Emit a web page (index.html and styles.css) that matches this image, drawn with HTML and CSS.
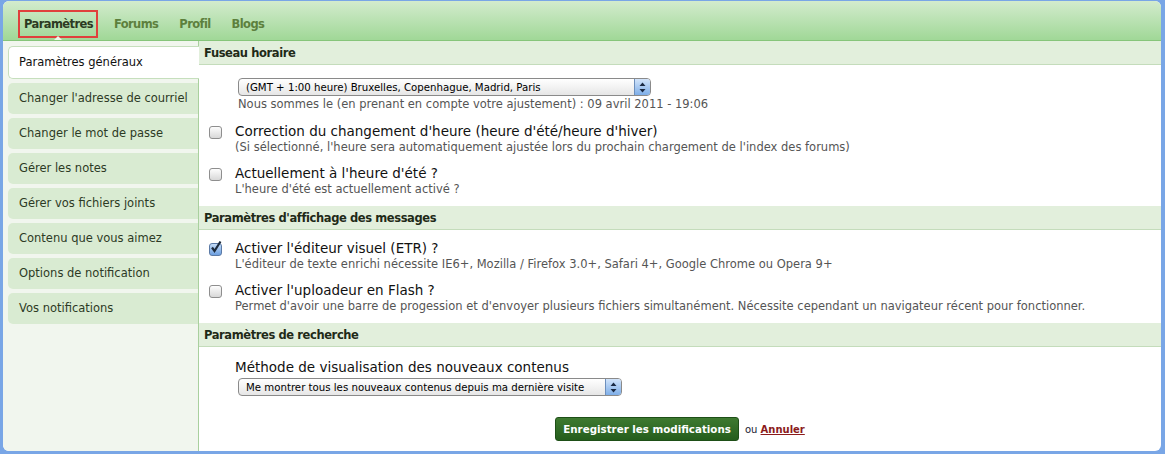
FILE: index.html
```html
<!DOCTYPE html>
<html lang="fr">
<head>
    <meta charset="UTF-8">
    <title>Paramètres</title>
    <link rel="stylesheet" href="styles.css">
</head>
<body>

<div class="window">
    <div class="tabs">
        <a class="tab active" href="#">Paramètres<span class="caret"></span></a>
        <a class="tab" href="#">Forums</a>
        <a class="tab" href="#">Profil</a>
        <a class="tab" href="#">Blogs</a>
    </div>

    <div class="main">
        <div class="sidebar">
            <a class="side-item current" href="#">Paramètres généraux</a>
            <a class="side-item" href="#">Changer l'adresse de courriel</a>
            <a class="side-item" href="#">Changer le mot de passe</a>
            <a class="side-item" href="#">Gérer les notes</a>
            <a class="side-item" href="#">Gérer vos fichiers joints</a>
            <a class="side-item" href="#">Contenu que vous aimez</a>
            <a class="side-item" href="#">Options de notification</a>
            <a class="side-item" href="#">Vos notifications</a>
        </div>

        <div class="content">
            <h3 class="section-title">Fuseau horaire</h3>
            <div class="section">
                <div class="field">
                    <div class="select wide">
                        <span class="select-text">(GMT + 1:00 heure) Bruxelles, Copenhague, Madrid, Paris</span>
                        <span class="arrows"><svg width="7" height="11" viewBox="0 0 7 11"><path d="M3.5 0.5 L6.5 4 L0.5 4 Z M3.5 10.5 L6.5 7 L0.5 7 Z" fill="#1b2a44"/></svg></span>
                    </div>
                    <p class="desc">Nous sommes le (en prenant en compte votre ajustement) : 09 avril 2011 - 19:06</p>
                </div>
                <div class="option">
                    <span class="check"></span>
                    <div>
                        <div class="label">Correction du changement d'heure (heure d'été/heure d'hiver)</div>
                        <p class="desc">(Si sélectionné, l'heure sera automatiquement ajustée lors du prochain chargement de l'index des forums)</p>
                    </div>
                </div>
                <div class="option">
                    <span class="check"></span>
                    <div>
                        <div class="label">Actuellement à l'heure d'été ?</div>
                        <p class="desc">L'heure d'été est actuellement activé ?</p>
                    </div>
                </div>
            </div>

            <h3 class="section-title">Paramètres d'affichage des messages</h3>
            <div class="section">
                <div class="option">
                    <span class="check checked"><svg width="14" height="14" viewBox="0 0 14 14"><path d="M3 7.5 L5.5 11 L11.5 1.5" fill="none" stroke="#1d2b3c" stroke-width="2.2"/></svg></span>
                    <div>
                        <div class="label">Activer l'éditeur visuel (ETR) ?</div>
                        <p class="desc">L'éditeur de texte enrichi nécessite IE6+, Mozilla / Firefox 3.0+, Safari 4+, Google Chrome ou Opera 9+</p>
                    </div>
                </div>
                <div class="option">
                    <span class="check"></span>
                    <div>
                        <div class="label">Activer l'uploadeur en Flash ?</div>
                        <p class="desc">Permet d'avoir une barre de progession et d'envoyer plusieurs fichiers simultanément. Nécessite cependant un navigateur récent pour fonctionner.</p>
                    </div>
                </div>
            </div>

            <h3 class="section-title">Paramètres de recherche</h3>
            <div class="section">
                <div class="field">
                    <div class="label">Méthode de visualisation des nouveaux contenus</div>
                    <div class="select">
                        <span class="select-text">Me montrer tous les nouveaux contenus depuis ma dernière visite</span>
                        <span class="arrows"><svg width="7" height="11" viewBox="0 0 7 11"><path d="M3.5 0.5 L6.5 4 L0.5 4 Z M3.5 10.5 L6.5 7 L0.5 7 Z" fill="#1b2a44"/></svg></span>
                    </div>
                </div>
            </div>

            <div class="actions">
                <button class="save">Enregistrer les modifications</button>
                <span class="or">ou <a href="#">Annuler</a></span>
            </div>
        </div>
    </div>
</div>

</body>
</html>
```

FILE: styles.css
```css
body {
    margin: 0;
    background: #79a6e6;
    font-family: "DejaVu Sans", sans-serif;
    color: #222;
}
.window {
    margin: 1px 4px 3px 3px;
    height: 450px;
    background: #fff;
    border-radius: 6px;
    overflow: hidden;
    display: flex;
    flex-direction: column;
}
.tabs {
    flex-shrink: 0;
    height: 37px;
    background: linear-gradient(#d3ebcd, #a0d897);
    border-bottom: 1px solid #86c57a;
    display: flex;
    align-items: flex-end;
    padding: 0 0 2px 15px;
    gap: 21px;
}
.tab {
    position: relative;
    font-size: 11.5px;
    font-weight: bold;
    letter-spacing: -0.6px;
    line-height: 14px;
    color: #5d803d;
    text-decoration: none;
    padding: 7px 0;
}
.tab.active {
    color: #2c3a22;
    border: 2px solid #e0403c;
    padding: 5px 3px 5px 4px;
    margin-right: -5px;
}
.caret {
    position: absolute;
    left: 50%;
    bottom: -4px;
    margin-left: -4px;
    border: 4px solid transparent;
    border-bottom-color: #eef6ea;
    border-top: 0;
}
.main {
    flex: 1;
    display: flex;
}
.sidebar {
    width: 190px;
    padding: 5px 0 0 5px;
    background: #f1f6ee;
    border-right: 1px solid #a9d09e;
    display: flex;
    flex-direction: column;
    gap: 4px;
}
.side-item {
    height: 31px;
    line-height: 31px;
    padding-left: 11px;
    font-size: 11.5px;
    color: #2d3a25;
    text-decoration: none;
    background: #d9ebd2;
    border-radius: 5px 0 0 5px;
}
.side-item.current {
    background: #fff;
    color: #111;
    border: 1px solid #c6dfbd;
    border-right: 0;
    margin-right: -1px;
    padding-left: 10px;
    position: relative;
}
.content {
    flex: 1;
}
.section-title {
    margin: 0;
    height: 23px;
    line-height: 24px;
    padding-left: 5px;
    font-size: 11.5px;
    letter-spacing: -0.4px;
    color: #1f2a18;
    background: #e2efdc;
    border-bottom: 1px solid #c4dcbb;
}
.section {
    padding: 10px 0 9px 10px;
}
.field {
    padding: 2px 0 0 29px;
}
.field > .label {
    margin-left: -3px;
}
.option {
    display: flex;
    gap: 13px;
    margin-top: 10px;
}
.section > .option:first-child {
    margin-top: 0;
}
.field + .option {
    margin-top: 11px;
}
.check {
    width: 11px;
    height: 11px;
    margin-top: 3px;
    border: 1px solid #8e8e8e;
    border-radius: 3px;
    background: linear-gradient(#fdfdfd, #d8d8d8);
    flex-shrink: 0;
    position: relative;
}
.check.checked {
    background: linear-gradient(#c5dcf7, #6c9fe0);
    border-color: #5b7aa6;
}
.check svg {
    position: absolute;
    left: -1px;
    top: -4px;
}
.label {
    font-size: 13.5px;
    color: #111;
    line-height: 17px;
}
.desc {
    margin: 0;
    font-size: 11.5px;
    color: #555;
    line-height: 15px;
}
.select {
    width: 411px;
    height: 16px;
    border: 1px solid #8a8a8a;
    border-radius: 4px;
    background: linear-gradient(#ffffff, #e6e6e6);
    display: flex;
    align-items: center;
    justify-content: space-between;
    overflow: hidden;
}
.select.wide {
    margin: 1px 0 1px 0;
}
.field > .label + .select {
    width: 382px;
    margin-top: 2px;
}
.select-text {
    font-size: 10.2px;
    color: #000;
    padding-left: 7px;
    white-space: nowrap;
}
.arrows {
    width: 15px;
    height: 16px;
    display: flex;
    align-items: center;
    justify-content: center;
    background: linear-gradient(#d2e4fa, #7eaee8);
    border-left: 1px solid #6d8fbc;
}
.actions {
    display: flex;
    justify-content: center;
    align-items: center;
    margin-top: 12px;
}
.save {
    font-family: "DejaVu Sans", sans-serif;
    font-size: 10.3px;
    font-weight: bold;
    color: #fff;
    height: 24px;
    background: linear-gradient(#3e7a30, #255d1c);
    border: 1px solid #1e4f17;
    border-radius: 3px;
    padding: 0 7px;
    cursor: pointer;
}
.or {
    font-size: 10px;
    color: #1a2233;
    margin-left: 6px;
}
.or a {
    color: #8b1b1b;
    font-weight: bold;
}
```
